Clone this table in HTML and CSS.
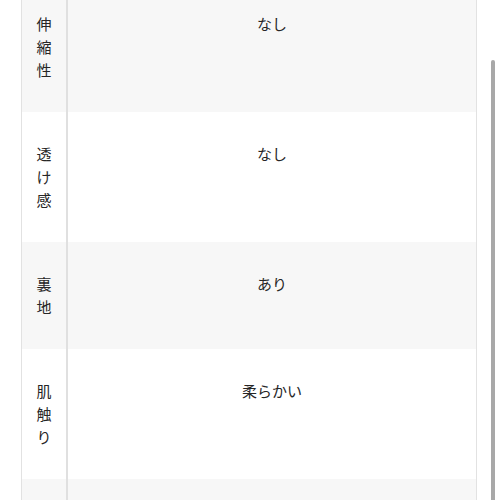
FILE: index.html
```html
<!DOCTYPE html>
<html lang="ja">
<head>
<meta charset="utf-8">
<link rel="stylesheet" href="styles.css">
</head>
<body>
<div class="wrap">
  <table class="spec">
    <tr class="alt">
      <th><span class="vt">伸<br>縮<br>性</span></th>
      <td>なし</td>
    </tr>
    <tr>
      <th><span class="vt">透<br>け<br>感</span></th>
      <td>なし</td>
    </tr>
    <tr class="alt">
      <th><span class="vt">裏<br>地</span></th>
      <td>あり</td>
    </tr>
    <tr>
      <th><span class="vt">肌<br>触<br>り</span></th>
      <td>柔らかい</td>
    </tr>
    <tr class="alt">
      <th><span class="vt">&nbsp;</span></th>
      <td>&nbsp;</td>
    </tr>
  </table>
</div>
<div class="scrollbar"></div>
</body>
</html>
```

FILE: styles.css
```css
html, body {
  margin: 0;
  padding: 0;
  background: #ffffff;
  overflow: hidden;
}
body {
  width: 500px;
  height: 500px;
  position: relative;
  font-family: "Noto Sans CJK JP", "Noto Sans", sans-serif;
  color: #262626;
  font-size: 15px;
}
.wrap {
  padding-left: 21px;
  margin-top: -18px;
  width: 456px;
}
.spec {
  width: 456px;
  border-collapse: collapse;
  border-left: 1px solid #e2e2e2;
  border-right: 1px solid #e2e2e2;
  table-layout: fixed;
}
.spec th {
  width: 44px;
  padding: 30px 0 31px;
  font-weight: normal;
  text-align: center;
  vertical-align: top;
  line-height: 23px;
  border-right: 2px solid #e0e0e0;
}
.spec td {
  padding: 30px 0 31px;
  text-align: center;
  vertical-align: top;
  line-height: 23px;
}
.spec tr.alt th,
.spec tr.alt td {
  background: #f7f7f7;
}
.scrollbar {
  position: absolute;
  left: 491px;
  top: 60px;
  width: 4px;
  height: 440px;
  background: #a8a8a8;
  border-radius: 2px 2px 0 0;
}
```
